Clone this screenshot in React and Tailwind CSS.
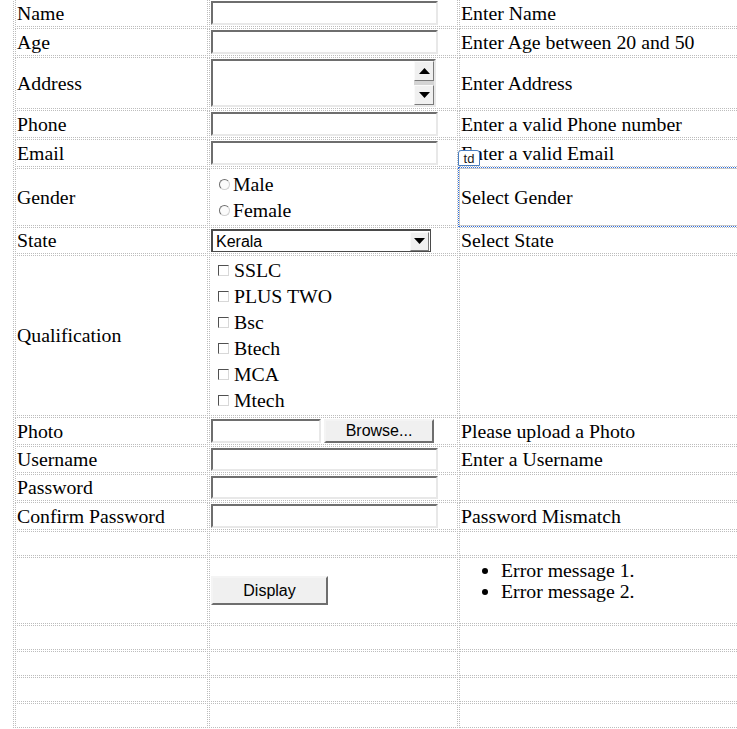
import React from 'react';

const cell = 'border border-dotted border-[#bdbdbd] p-[1px]';
const inset = 'border-2 border-t-[#6e6e6e] border-l-[#6e6e6e] border-r-[#e8e8e8] border-b-[#e8e8e8] bg-white';
const outset = 'border-2 border-t-[#f4f4f4] border-l-[#f4f4f4] border-r-[#6e6e6e] border-b-[#6e6e6e] bg-[#f0f0f0]';

const TextBox = ({ w = 'w-[227px]', h = 'h-[24px]' }) => (
  <input readOnly className={`${w} ${h} block ${inset} outline-none`} />
);

const Arrow = ({ down }) => (
  <svg width="11" height="6" viewBox="0 0 11 6">
    <path d={down ? 'M0 0h11L5.5 6z' : 'M0 6h11L5.5 0z'} fill="#000" />
  </svg>
);

const ScrollBtn = ({ down }) => (
  <div className="w-[20px] h-[20px] flex items-center justify-center bg-[#f0f0f0] border border-t-[#fafafa] border-l-[#fafafa] border-r-[#7a7a7a] border-b-[#7a7a7a]">
    <Arrow down={down} />
  </div>
);

const Radio = ({ label }) => (
  <div className="h-[26px] flex items-center">
    <span className="w-[11px] h-[11px] ml-[8px] rounded-full border border-t-[#6e6e6e] border-l-[#6e6e6e] border-r-[#d0d0d0] border-b-[#d0d0d0] bg-[#fbfbfb]" />
    <span className="ml-[3px]">{label}</span>
  </div>
);

const Check = ({ label }) => (
  <div className="h-[26px] flex items-center">
    <span className="w-[11px] h-[11px] ml-[7px] border border-t-[#505050] border-l-[#505050] border-r-[#d8d8d8] border-b-[#d8d8d8] bg-white" />
    <span className="ml-[5px]">{label}</span>
  </div>
);

const Row = ({ label, h = 'h-[28px]', children, hint }) => (
  <tr>
    <td className={`${cell} ${h}`}>{label}</td>
    <td className={cell}>{children}</td>
    <td className={cell}>{hint}</td>
  </tr>
);

export default function App() {
  const qualifications = ['SSLC', 'PLUS TWO', 'Bsc', 'Btech', 'MCA', 'Mtech'];

  return (
    <div className="w-[737px] h-[729px] overflow-hidden bg-white">
      <table className="table-fixed w-[760px] ml-[13px] mt-[-3px] border-separate border-spacing-[1px] border border-dotted border-[#bdbdbd] font-['Liberation_Serif',serif] text-[19.8px] leading-[23px] text-black">
        <colgroup>
          <col className="w-[193px]" />
          <col className="w-[249px]" />
          <col />
        </colgroup>
        <tbody>
          <Row label="Name" hint="Enter Name"><TextBox /></Row>
          <Row label="Age" hint="Enter Age between 20 and 50"><TextBox /></Row>
          <Row label="Address" h="h-[52px]" hint="Enter Address">
            <div className={`w-[225px] h-[48px] flex justify-end ${inset}`}>
              <div className="w-[20px] flex flex-col justify-between bg-[#d4d4d4]">
                <ScrollBtn />
                <ScrollBtn down />
              </div>
            </div>
          </Row>
          <Row label="Phone" hint="Enter a valid Phone number"><TextBox /></Row>
          <Row label="Email" hint="Enter a valid Email"><TextBox /></Row>
          <tr>
            <td className={`${cell} h-[58px]`}>Gender</td>
            <td className={cell}>
              <Radio label="Male" />
              <Radio label="Female" />
            </td>
            <td className="relative border border-solid border-[#c8c8c8] p-[1px] outline outline-1 outline-dotted outline-offset-0 outline-[#2f6fe0]">
              Select Gender
              {/* designer tag over the selected cell */}
              <span className="absolute left-[-2px] top-[-19px] w-[22px] h-[16px] flex items-center justify-center rounded-t-[3px] border border-[#4a7ec0] bg-white font-['Liberation_Sans',sans-serif] text-[13px] leading-none text-[#1a1a1a]">
                td
              </span>
            </td>
          </tr>
          <Row label="State" h="h-[27px]" hint="Select State">
            <div className="w-[220px] h-[23px] flex items-center border border-[#4a4a4a] border-t-2 border-l-2 bg-white font-['Liberation_Sans',sans-serif] text-[16px]">
              <span className="flex-1 pl-[3px]">Kerala</span>
              <div className="w-[19px] h-[19px] mr-[1px] flex items-center justify-center bg-[#f0f0f0] border border-t-[#fafafa] border-l-[#fafafa] border-r-[#7a7a7a] border-b-[#7a7a7a]">
                <Arrow down />
              </div>
            </div>
          </Row>
          <tr>
            <td className={`${cell} h-[161px]`}>Qualification</td>
            <td className={cell}>
              {qualifications.map(q => <Check key={q} label={q} />)}
            </td>
            <td className={cell}></td>
          </tr>
          <Row label="Photo" hint="Please upload a Photo">
            <div className="flex items-center gap-[3px]">
              <TextBox w="w-[110px]" />
              <button className={`w-[110px] h-[24px] ${outset} font-['Liberation_Sans',sans-serif] text-[16px] leading-none`}>
                Browse...
              </button>
            </div>
          </Row>
          <Row label="Username" h="h-[27px]" hint="Enter a Username"><TextBox h="h-[23px]" /></Row>
          <Row label="Password" h="h-[27px]"><TextBox h="h-[23px]" /></Row>
          <Row label="Confirm Password" hint="Password Mismatch"><TextBox /></Row>
          <Row label="" h="h-[25px]" />
          <tr>
            <td className={`${cell} h-[67px]`}></td>
            <td className={cell}>
              <button className={`w-[117px] h-[29px] ${outset} font-['Liberation_Sans',sans-serif] text-[16px] leading-none`}>
                Display
              </button>
            </td>
            <td className={cell}>
              <ul className="list-disc pl-[40px] mb-[20px] leading-[21px]">
                <li>Error message 1.</li>
                <li>Error message 2.</li>
              </ul>
            </td>
          </tr>
          <Row label="" h="h-[25px]" />
          <Row label="" h="h-[25px]" />
          <Row label="" h="h-[25px]" />
          <Row label="" h="h-[25px]" />
        </tbody>
      </table>
    </div>
  );
}
